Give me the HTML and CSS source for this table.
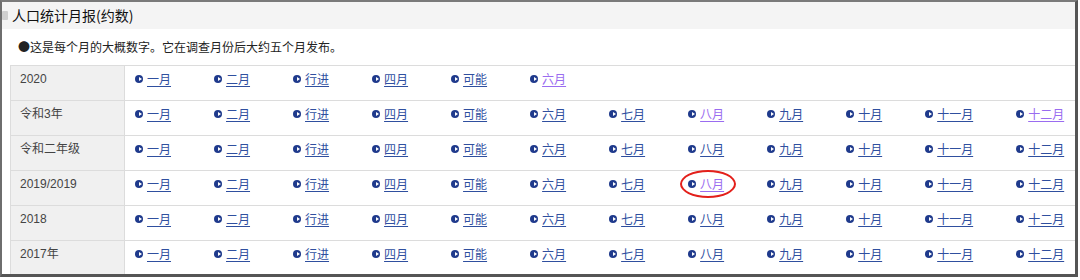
FILE: index.html
```html
<!DOCTYPE html>
<html lang="zh-CN">
<head>
<meta charset="utf-8">
<title>人口统计月报(约数)</title>
<link rel="stylesheet" href="styles.css">
</head>
<body>
<div class="frame">
  <div class="head"><span class="mark"></span><h1 class="title">人口统计月报(约数)</h1></div>
  <p class="notice">●这是每个月的大概数字。它在调查月份后大约五个月发布。</p>
  <div class="grid">
    <div class="row">
      <div class="year">2020</div>
      <div class="links">
        <a class="item" href="#"><i class="dot"></i><span>一月</span></a>
        <a class="item" href="#"><i class="dot"></i><span>二月</span></a>
        <a class="item" href="#"><i class="dot"></i><span>行进</span></a>
        <a class="item" href="#"><i class="dot"></i><span>四月</span></a>
        <a class="item" href="#"><i class="dot"></i><span>可能</span></a>
        <a class="item visited" href="#"><i class="dot"></i><span>六月</span></a>
      </div>
    </div>
    <div class="row">
      <div class="year">令和3年</div>
      <div class="links">
        <a class="item" href="#"><i class="dot"></i><span>一月</span></a>
        <a class="item" href="#"><i class="dot"></i><span>二月</span></a>
        <a class="item" href="#"><i class="dot"></i><span>行进</span></a>
        <a class="item" href="#"><i class="dot"></i><span>四月</span></a>
        <a class="item" href="#"><i class="dot"></i><span>可能</span></a>
        <a class="item" href="#"><i class="dot"></i><span>六月</span></a>
        <a class="item" href="#"><i class="dot"></i><span>七月</span></a>
        <a class="item visited" href="#"><i class="dot"></i><span>八月</span></a>
        <a class="item" href="#"><i class="dot"></i><span>九月</span></a>
        <a class="item" href="#"><i class="dot"></i><span>十月</span></a>
        <a class="item" href="#"><i class="dot"></i><span>十一月</span></a>
        <a class="item visited" href="#"><i class="dot"></i><span>十二月</span></a>
      </div>
    </div>
    <div class="row">
      <div class="year">令和二年级</div>
      <div class="links">
        <a class="item" href="#"><i class="dot"></i><span>一月</span></a>
        <a class="item" href="#"><i class="dot"></i><span>二月</span></a>
        <a class="item" href="#"><i class="dot"></i><span>行进</span></a>
        <a class="item" href="#"><i class="dot"></i><span>四月</span></a>
        <a class="item" href="#"><i class="dot"></i><span>可能</span></a>
        <a class="item" href="#"><i class="dot"></i><span>六月</span></a>
        <a class="item" href="#"><i class="dot"></i><span>七月</span></a>
        <a class="item" href="#"><i class="dot"></i><span>八月</span></a>
        <a class="item" href="#"><i class="dot"></i><span>九月</span></a>
        <a class="item" href="#"><i class="dot"></i><span>十月</span></a>
        <a class="item" href="#"><i class="dot"></i><span>十一月</span></a>
        <a class="item" href="#"><i class="dot"></i><span>十二月</span></a>
      </div>
    </div>
    <div class="row">
      <div class="year">2019/2019</div>
      <div class="links">
        <a class="item" href="#"><i class="dot"></i><span>一月</span></a>
        <a class="item" href="#"><i class="dot"></i><span>二月</span></a>
        <a class="item" href="#"><i class="dot"></i><span>行进</span></a>
        <a class="item" href="#"><i class="dot"></i><span>四月</span></a>
        <a class="item" href="#"><i class="dot"></i><span>可能</span></a>
        <a class="item" href="#"><i class="dot"></i><span>六月</span></a>
        <a class="item" href="#"><i class="dot"></i><span>七月</span></a>
        <a class="item visited circled" href="#"><i class="dot"></i><span>八月</span><b class="ring"></b></a>
        <a class="item" href="#"><i class="dot"></i><span>九月</span></a>
        <a class="item" href="#"><i class="dot"></i><span>十月</span></a>
        <a class="item" href="#"><i class="dot"></i><span>十一月</span></a>
        <a class="item" href="#"><i class="dot"></i><span>十二月</span></a>
      </div>
    </div>
    <div class="row">
      <div class="year">2018</div>
      <div class="links">
        <a class="item" href="#"><i class="dot"></i><span>一月</span></a>
        <a class="item" href="#"><i class="dot"></i><span>二月</span></a>
        <a class="item" href="#"><i class="dot"></i><span>行进</span></a>
        <a class="item" href="#"><i class="dot"></i><span>四月</span></a>
        <a class="item" href="#"><i class="dot"></i><span>可能</span></a>
        <a class="item" href="#"><i class="dot"></i><span>六月</span></a>
        <a class="item" href="#"><i class="dot"></i><span>七月</span></a>
        <a class="item" href="#"><i class="dot"></i><span>八月</span></a>
        <a class="item" href="#"><i class="dot"></i><span>九月</span></a>
        <a class="item" href="#"><i class="dot"></i><span>十月</span></a>
        <a class="item" href="#"><i class="dot"></i><span>十一月</span></a>
        <a class="item" href="#"><i class="dot"></i><span>十二月</span></a>
      </div>
    </div>
    <div class="row">
      <div class="year">2017年</div>
      <div class="links">
        <a class="item" href="#"><i class="dot"></i><span>一月</span></a>
        <a class="item" href="#"><i class="dot"></i><span>二月</span></a>
        <a class="item" href="#"><i class="dot"></i><span>行进</span></a>
        <a class="item" href="#"><i class="dot"></i><span>四月</span></a>
        <a class="item" href="#"><i class="dot"></i><span>可能</span></a>
        <a class="item" href="#"><i class="dot"></i><span>六月</span></a>
        <a class="item" href="#"><i class="dot"></i><span>七月</span></a>
        <a class="item" href="#"><i class="dot"></i><span>八月</span></a>
        <a class="item" href="#"><i class="dot"></i><span>九月</span></a>
        <a class="item" href="#"><i class="dot"></i><span>十月</span></a>
        <a class="item" href="#"><i class="dot"></i><span>十一月</span></a>
        <a class="item" href="#"><i class="dot"></i><span>十二月</span></a>
      </div>
    </div>
  </div>
</div>
</body>
</html>
```

FILE: styles.css
```css
* { box-sizing: border-box; }
html, body { margin: 0; padding: 0; background: #fff; }
body {
  font-family: "Noto Sans CJK SC", "Liberation Sans", sans-serif;
  font-size: 12px;
  color: #333;
}
.frame {
  width: 1078px;
  height: 277px;
  border-top: 2px solid #7a7a7a;
  border-left: 2px solid #6e6e6e;
  border-right: 3px solid #555;
  border-bottom: 3px solid #555;
  overflow: hidden;
}
.head {
  height: 27px;
  background: #f4f4f4;
  display: flex;
  align-items: center;
}
.mark {
  width: 6px;
  height: 9px;
  background: #cfcfcf;
  border-radius: 1px;
  margin-right: 4px;
}
.title {
  margin: 0;
  font-size: 14px;
  font-weight: 400;
  line-height: 27px;
  color: #111;
}
.notice {
  margin: 0;
  padding: 10px 0 10px 16px;
  line-height: 16px;
  font-size: 12px;
  color: #222;
}
.grid {
  margin-left: 8px;
  border-left: 1px solid #dcdcdc;
}
.row {
  display: grid;
  grid-template-columns: 114px 1fr;
  height: 35px;
  border-top: 1px solid #dcdcdc;
}
.year {
  background: #f0f0f0;
  border-right: 1px solid #dcdcdc;
  padding: 5px 0 0 9px;
  line-height: 16px;
  font-family: "Liberation Sans", "Noto Sans CJK SC", sans-serif;
  font-size: 12px;
  color: #444;
}
.links {
  display: flex;
  align-items: flex-start;
  padding: 5px 0 0 10px;
  line-height: 16px;
}
.item {
  position: relative;
  display: flex;
  align-items: center;
  margin-right: 43px;
  color: #2f4f9f;
  text-decoration: none;
  white-space: nowrap;
}
.item span {
  text-decoration: underline;
  text-underline-offset: 2px;
  margin-left: 4px;
}
.item.visited { color: #9a6cf0; }
.dot {
  width: 8px;
  height: 8px;
  border-radius: 50%;
  background: #1f3a8c;
  position: relative;
  display: block;
}
.dot::after {
  content: "";
  position: absolute;
  left: 4px;
  top: 2px;
  border-left: 3px solid #fff;
  border-top: 2px solid transparent;
  border-bottom: 2px solid transparent;
}
.ring {
  position: absolute;
  left: -8px;
  top: -6px;
  width: 56px;
  height: 28px;
  border: 2px solid #e3201b;
  border-radius: 50%;
}
```
